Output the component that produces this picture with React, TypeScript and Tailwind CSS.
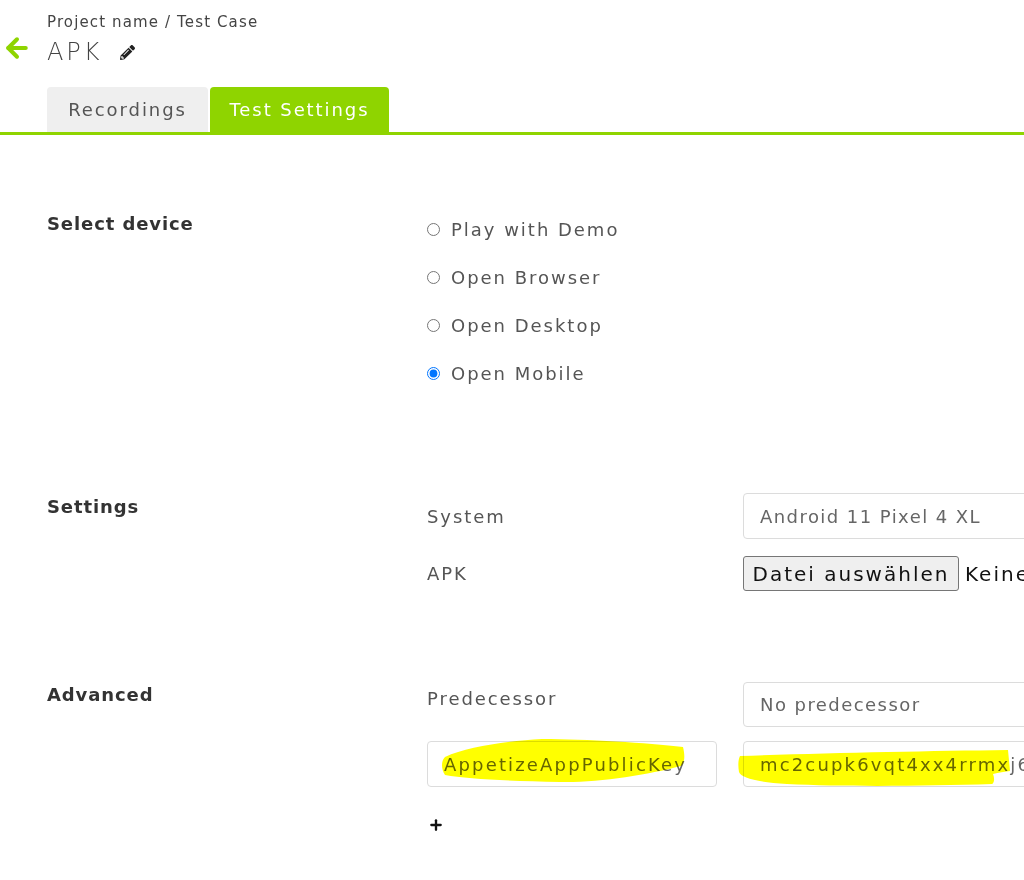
import { ArrowLeft, Plus } from "lucide-react";
import { FaPencilAlt } from "react-icons/fa";

const GREEN = "#8fd400";

const deviceOptions = ["Play with Demo", "Open Browser", "Open Desktop", "Open Mobile"];

function SectionLabel({ children, className = "" }: { children: string; className?: string }) {
  return (
    <div
      className={`w-[380px] shrink-0 text-[18px] font-semibold leading-[24px] tracking-[0.05em] text-[#333] ${className}`}
    >
      {children}
    </div>
  );
}

function FieldBox({ children, className = "" }: { children: React.ReactNode; className?: string }) {
  return (
    <div
      className={`flex items-center rounded-[4px] border border-[#dcdcdc] bg-white px-[16px] text-[18px] tracking-[0.08em] text-[#666] ${className}`}
    >
      {children}
    </div>
  );
}

export default function App() {
  return (
    <div
      className="relative h-[880px] w-[1024px] overflow-hidden bg-white tracking-[0.12em] text-[#444]"
      style={{ fontFamily: '"DejaVu Sans", "Noto Sans", sans-serif' }}
    >
      {/* header */}
      <div className="flex">
        <div className="w-[47px] shrink-0 pl-[2px] pt-[33px]">
          <ArrowLeft size={30} strokeWidth={3.2} color={GREEN} />
        </div>
        <div>
          <div className="pt-[12px] text-[15px] leading-[20px] tracking-[0.075em] text-[#444]">
            Project name / Test Case
          </div>
          <div className="mt-[4px] flex h-[32px] items-center gap-[18px] text-[24px] font-light tracking-[0.12em] text-[#444]">
            <span>APK</span>
            <FaPencilAlt size={15} className="text-[#222]" />
          </div>
        </div>
      </div>

      {/* tabs */}
      <div className="mt-[19px] flex gap-[2px] border-b-[3px] border-[#8fd400] pl-[47px]">
        <div className="flex h-[45px] w-[161px] items-center justify-center rounded-t-[4px] bg-[#efefef] text-[18px] text-[#555]">
          Recordings
        </div>
        <div className="flex h-[45px] w-[179px] items-center justify-center rounded-t-[4px] bg-[#8fd400] text-[18px] text-white">
          Test Settings
        </div>
      </div>

      {/* select device */}
      <div className="mt-[70px] flex pl-[47px]">
        <SectionLabel className="mt-[7px]">Select device</SectionLabel>
        <div className="flex flex-col">
          {deviceOptions.map((opt) => (
            <label key={opt} className="flex h-[48px] items-center gap-[11px] text-[18px] tracking-[0.11em] text-[#555]">
              <input
                type="radio"
                name="device"
                defaultChecked={opt === "Open Mobile"}
                className="m-0 h-[13px] w-[13px]"
              />
              {opt}
            </label>
          ))}
        </div>
      </div>

      {/* settings */}
      <div className="mt-[96px] flex pl-[47px]">
        <SectionLabel className="mt-[2px]">Settings</SectionLabel>
        <div className="flex flex-col gap-[17px]">
          <div className="flex items-center">
            <div className="w-[316px] text-[18px] text-[#555]">System</div>
            <FieldBox className="h-[46px] w-[420px] tracking-[0.06em]">Android 11 Pixel 4 XL</FieldBox>
          </div>
          <div className="flex items-center">
            <div className="w-[316px] text-[18px] text-[#555]">APK</div>
            <div className="flex items-center gap-[6px] whitespace-nowrap text-[20px] tracking-[0.1em] text-[#111]">
              <button className="h-[35px] w-[216px] rounded-[3px] border border-[#767676] bg-[#efefef] text-[20px] tracking-[0.1em] text-[#111]">
                Datei auswählen
              </button>
              <span>Keine Datei ausgewählt</span>
            </div>
          </div>
        </div>
      </div>

      {/* advanced */}
      <div className="mt-[91px] flex pl-[47px]">
        <SectionLabel className="mt-[1px]">Advanced</SectionLabel>
        <div className="flex flex-col">
          <div className="flex items-start">
            <div className="mt-[5px] w-[316px] text-[18px] leading-[24px] text-[#555]">Predecessor</div>
            <FieldBox className="h-[45px] w-[420px]">No predecessor</FieldBox>
          </div>
          <div className="relative mt-[14px] flex gap-[26px]">
            <FieldBox className="h-[46px] w-[290px] whitespace-nowrap tracking-[0.12em]">AppetizeAppPublicKey</FieldBox>
            <FieldBox className="h-[46px] w-[420px] whitespace-nowrap tracking-[0.12em]">mc2cupk6vqt4xx4rrmxj6b2h</FieldBox>
            {/* marker highlights */}
            <svg
              className="pointer-events-none absolute left-0 top-0 overflow-visible mix-blend-multiply"
              width="600"
              height="46"
              viewBox="0 0 600 46"
            >
              <path
                d="M18 16 C 40 6, 80 0, 115 -2 C 160 -2, 220 2, 256 6 C 258 14, 258 22, 254 25 C 220 34, 170 42, 133 41 C 80 40, 40 38, 18 34 C 14 28, 14 20, 18 16 Z"
                fill="#ffff00"
              />
              <path
                d="M313 15 C 400 12, 500 10, 581 9 L 583 30 C 575 31, 570 32, 566 33 C 568 38, 567 42, 565 43 C 500 45, 420 46, 360 43 C 330 41, 314 37, 312 31 C 311 25, 311 19, 313 15 Z"
                fill="#ffff00"
              />
            </svg>
          </div>
          <div className="mt-[30px] pl-[1px]">
            <Plus size={16} strokeWidth={3.5} className="text-[#111]" />
          </div>
        </div>
      </div>
    </div>
  );
}
